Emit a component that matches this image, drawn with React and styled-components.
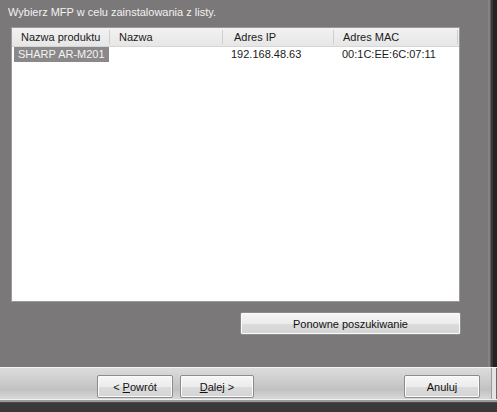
import styled, { createGlobalStyle } from "styled-components"

const Global = createGlobalStyle`
  html, body {
    margin: 0;
    padding: 0;
    background: #7a7878;
  }
  * { box-sizing: border-box; }
`

const Window = styled.div`
  width: 497px;
  height: 412px;
  display: flex;
  flex-direction: column;
  font-family: "Liberation Sans", Arial, sans-serif;
  font-size: 11px;
  overflow: hidden;
`

const Body = styled.div`
  flex: 1;
  display: flex;
`

const Main = styled.div`
  flex: 1;
  background: #7a7878;
  padding: 5px 0 0 11px;
`

const Edge = styled.div`
  width: 10px;
  background: linear-gradient(to right, #7a7878 0 1px, #858383 1px 3px, #5e5c5c 3px 4px, #3a3939 4px 6px, #242424 6px);
`

const Title = styled.div`
  color: #f2f2f2;
  line-height: 14px;
  margin-left: -3px;
  height: 22px;
`

const List = styled.div`
  width: 449px;
  height: 275px;
  background: #fff;
  border: 1px solid #9c9a9a;
`

const Header = styled.div`
  display: grid;
  grid-template-columns: 98px 113px 111px 124px 1fr;
  height: 19px;
  background: linear-gradient(#f2f2f2, #e6e6e6);
  border-bottom: 1px solid #d6d6d6;
`

const HeadCell = styled.div`
  padding-left: ${(p) => p.$pad}px;
  color: #1a1a1a;
  border-right: ${(p) => (p.$last ? "none" : "1px solid #cfcfcf")};
  margin: 2px 0;
  line-height: 14px;
`

const Row = styled.div`
  display: grid;
  grid-template-columns: 98px 113px 111px 124px 1fr;
  height: 15px;
  line-height: 15px;
`

const Cell = styled.div`
  padding-left: ${(p) => p.$pad}px;
  color: #1a1a1a;
  white-space: nowrap;
`

const Selected = styled.span`
  display: inline-block;
  margin-left: 2px;
  padding: 0 1px 0 4px;
  width: 95px;
  background: #8a8888;
  color: #f4f4f4;
`

const Actions = styled.div`
  display: flex;
  justify-content: flex-end;
  width: 450px;
  margin-top: 10px;
`

const Button = styled.button`
  width: ${(p) => p.$w}px;
  height: 23px;
  padding: 0;
  font-family: inherit;
  font-size: 11px;
  color: #111;
  background: linear-gradient(#f6f6f6 0%, #ececec 50%, #dcdcdc 51%, #d4d4d4 100%);
  border: 1px solid #8c8c8c;
  border-radius: 2px;
  box-shadow: inset 0 0 0 1px #fbfbfb;
  u { text-decoration: underline; }
`

const Separator = styled.div`
  height: 1px;
  background: #f4f4f4;
`

const Footer = styled.div`
  height: 31px;
  display: flex;
  align-items: flex-start;
  padding: 7px 0 0 97px;
  gap: 7px;
  background: linear-gradient(#dcdcdc 0%, #cdcdcd 40%, #c2c2c2 70%, #d8d8d8 100%);
`

const Spacer = styled.div`
  flex: 1;
`

const FooterEnd = styled.div`
  width: 10px;
  align-self: stretch;
  margin: -7px 0 0 0;
  background: linear-gradient(to right, transparent 0 4px, #9a9a9a 4px 5px, #e4e4e4 5px 9px, #6a6a6a 9px);
`

const Bottom = styled.div`
  height: 13px;
  background: linear-gradient(#f0f0f0 0 1px, #9a9a9a 1px 3px, #4a4a4a 3px 4px, #393939 4px);
`

const columns = [
  { label: "Nazwa produktu", pad: 9 },
  { label: "Nazwa", pad: 9 },
  { label: "Adres IP", pad: 11 },
  { label: "Adres MAC", pad: 9 },
]

export default function App() {
  return (
    <Window>
      <Global />
      <Body>
        <Main>
          <Title>Wybierz MFP w celu zainstalowania z listy.</Title>
          <List>
            <Header>
              {columns.map((c) => (
                <HeadCell key={c.label} $pad={c.pad}>
                  {c.label}
                </HeadCell>
              ))}
              <HeadCell $last />
            </Header>
            <Row>
              <Cell>
                <Selected>SHARP AR-M201</Selected>
              </Cell>
              <Cell />
              <Cell $pad={8}>192.168.48.63</Cell>
              <Cell $pad={8}>00:1C:EE:6C:07:11</Cell>
            </Row>
          </List>
          <Actions>
            <Button $w={221}>Ponowne poszukiwanie</Button>
          </Actions>
        </Main>
        <Edge />
      </Body>
      <Separator />
      <Footer>
        <Button $w={76}>
          &lt; <u>P</u>owrót
        </Button>
        <Button $w={74}>
          <u>D</u>alej &gt;
        </Button>
        <Spacer />
        <Button $w={76}>Anuluj</Button>
        <FooterEnd />
      </Footer>
      <Bottom />
    </Window>
  )
}
